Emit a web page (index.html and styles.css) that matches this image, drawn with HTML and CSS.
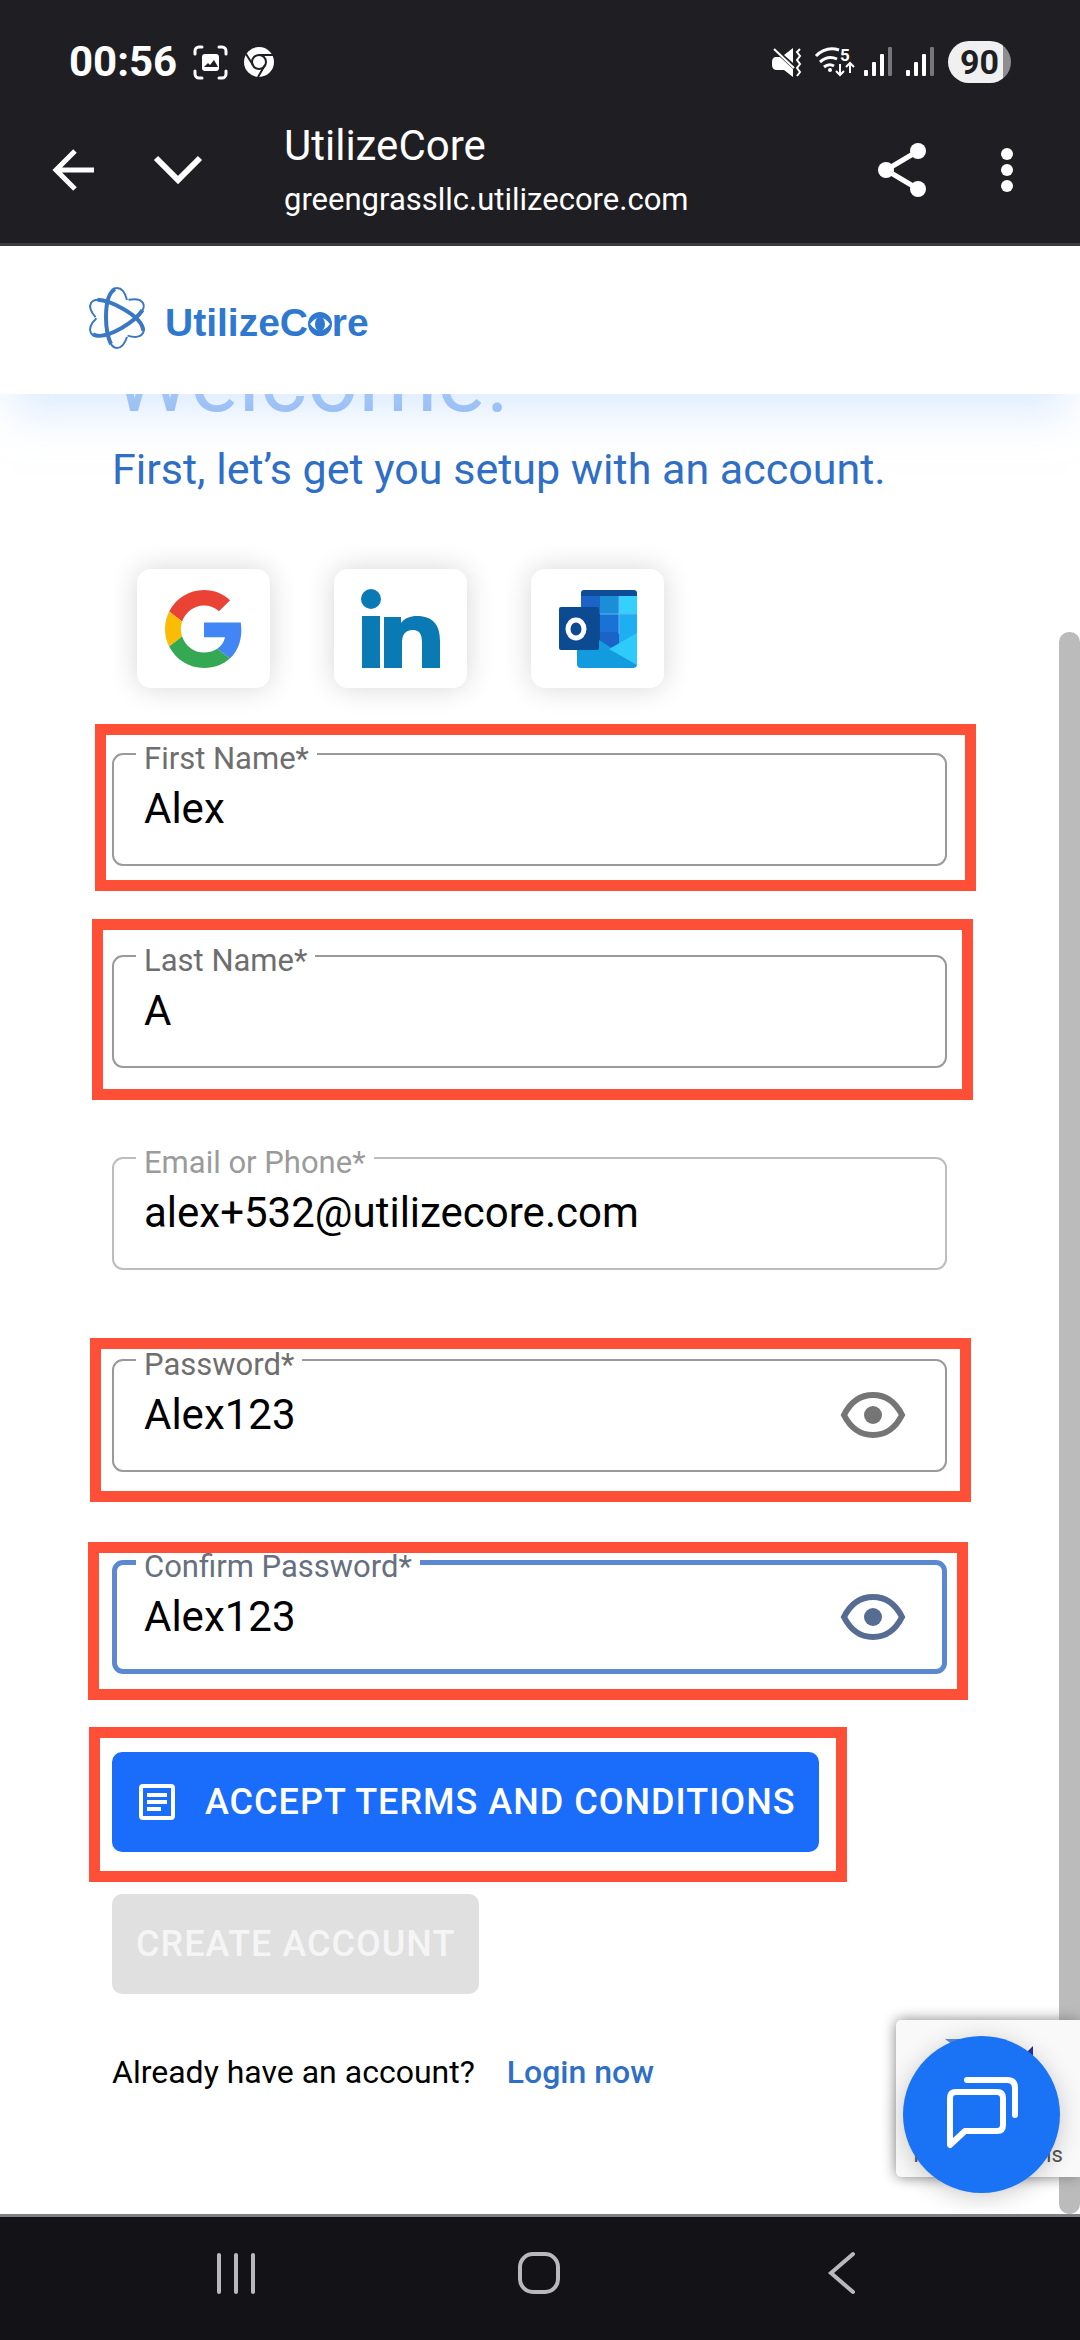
FILE: index.html
```html
<!DOCTYPE html>
<html lang="en">
    <head>
        <meta charset="utf-8">
        <meta name="viewport" content="width=device-width, initial-scale=1">
        <title>UtilizeCore</title>
        <link rel="stylesheet" href="styles.css">
    </head>
    <body>
        <div class="browser-top">
            <div class="status-bar">
                <span class="time">00:56</span>
                <svg class="capture-icon" width="35" height="35" viewBox="0 0 35 35" fill="none" stroke="#fff" stroke-width="3" stroke-linecap="round">
                    <path d="M2 9V6a4 4 0 0 1 4-4h3M26 2h3a4 4 0 0 1 4 4v3M33 26v3a4 4 0 0 1-4 4h-3M9 33H6a4 4 0 0 1-4-4v-3"/>
                    <rect x="9" y="9" width="17" height="17" rx="3" fill="#fff" stroke="none"/>
                    <path d="M11 22l4-4 2 2 4-5 4 7z" fill="#1f1e23" stroke="none"/>
                </svg>
                <svg width="30" height="30" viewBox="0 0 30 30">
                    <circle cx="15" cy="15" r="15" fill="#fff"/>
                    <circle cx="15" cy="15" r="7" fill="none" stroke="#1f1e23" stroke-width="2"/>
                    <path d="M15 8h14M9 18L2 7M21 18l-7 12" stroke="#1f1e23" stroke-width="2"/>
                </svg>
                <div class="status-right">
                    <svg class="mute-icon" width="29" height="29" viewBox="0 0 29 29">
                        <path d="M0 14q0-4 3-5h5l13 12v8l-9-7H5q-5 0-5-5zM12 7l9-7v15z" fill="#fff"/>
                        <path d="M2 1l20 19" stroke="#fff" stroke-width="2"/>
                        <path d="M28 1l-3 3 3 4-3 4 3 4-3 4 3 4-3 4" fill="none" stroke="#fff" stroke-width="2"/>
                    </svg>
                    <svg class="wifi-icon" width="39" height="30" viewBox="0 0 39 30" fill="none" stroke="#fff" stroke-width="3">
                        <path d="M1 9Q11-1 24 3M5 15q8-7 17-3M9 20q5-4 10-1"/>
                        <circle cx="15" cy="23" r="2" fill="#fff" stroke="none"/>
                        <path d="M25 17v11m-4-4l4 4 4-4M35 26V16m-4 4l4-4 4 4" stroke-width="2"/>
                        <text x="25" y="14" class="wifi-band">5</text>
                    </svg>
                    <svg class="signal-icon" width="28" height="30" viewBox="0 0 28 30" fill="#fff">
                        <rect x="0" y="23" width="4" height="6" rx="1"/>
                        <rect x="8" y="15" width="4" height="14" rx="1"/>
                        <rect x="16" y="7" width="4" height="22" rx="1"/>
                        <rect x="24" y="0" width="4" height="29" rx="1" fill="#77767a"/>
                    </svg>
                    <svg class="signal-icon" width="28" height="30" viewBox="0 0 28 30" fill="#fff">
                        <rect x="0" y="23" width="4" height="6" rx="1"/>
                        <rect x="8" y="15" width="4" height="14" rx="1"/>
                        <rect x="16" y="7" width="4" height="22" rx="1"/>
                        <rect x="24" y="0" width="4" height="29" rx="1" fill="#77767a"/>
                    </svg>
                    <span class="battery">90</span>
                </div>
            </div>
            <div class="toolbar">
                <button class="icon-button" aria-label="Back">
                    <svg width="42" height="42" viewBox="0 0 42 42" fill="none" stroke="#fff" stroke-width="5"><path d="M42 21H4M23 2L4 21l19 19"/></svg>
                </button>
                <button class="icon-button chevron" aria-label="Minimize">
                    <svg width="48" height="30" viewBox="0 0 48 30" fill="none" stroke="#fff" stroke-width="6"><path d="M2 3l22 22L46 3"/></svg>
                </button>
                <div class="page-info">
                    <div class="page-title">UtilizeCore</div>
                    <div class="page-url">greengrassllc.utilizecore.com</div>
                </div>
                <button class="icon-button" aria-label="Share">
                    <svg width="48" height="54" viewBox="0 0 48 54" fill="#fff" stroke="#fff" stroke-width="5"><path d="M40 8L8 27l32 19" fill="none"/><circle cx="40" cy="8" r="8" stroke="none"/><circle cx="8" cy="27" r="8" stroke="none"/><circle cx="40" cy="46" r="8" stroke="none"/></svg>
                </button>
                <button class="icon-button more" aria-label="More">
                    <svg width="12" height="44" viewBox="0 0 12 44" fill="#fff"><circle cx="6" cy="6" r="6"/><circle cx="6" cy="22" r="6"/><circle cx="6" cy="38" r="6"/></svg>
                </button>
            </div>
        </div>

        <div class="page">
            <header class="site-header">
                <a href="#" class="logo">
                    <svg width="59" height="64" viewBox="0 0 59 64" fill="none" stroke="#3a78c6">
                        <g id="leaf">
                            <path d="M39 14C37 6 33 2 29 2 22 2 18 15 18 31c0 19 4 31 11 31 5 0 8-5 10-11" stroke-width="2"/>
                            <path d="M27 3c-7 4-9 16-9 28 0 11 2 21 5 27" stroke-width="4"/>
                        </g>
                        <use href="#leaf" transform="rotate(120 29 32)"/>
                        <use href="#leaf" transform="rotate(240 29 32)"/>
                    </svg>
                    <span class="logo-text">UtilizeC<span class="logo-o">o<svg viewBox="0 0 24 24"><circle cx="12" cy="12" r="12" fill="#2f78d0"/><path d="M2 12Q12-1 22 12 12 25 2 12z" fill="#fff"/><ellipse cx="12" cy="12" rx="5" ry="7" fill="#2f78d0"/></svg></span>re</span>
                </a>
            </header>

            <main class="content">
                <h1>Welcome!</h1>
                <p class="intro">First, let’s get you setup with an account.</p>

                <div class="social">
                    <button class="social-button" aria-label="Google">
                        <svg width="78" height="78" viewBox="0 0 48 48">
                            <path fill="#ea4335" d="M24 9.5c3.54 0 6.71 1.22 9.21 3.6l6.85-6.85C35.9 2.38 30.47 0 24 0 14.62 0 6.51 5.38 2.56 13.22l7.98 6.19C12.43 13.72 17.74 9.5 24 9.5z"/>
                            <path fill="#4285f4" d="M46.98 24.55c0-1.57-.15-3.09-.38-4.55H24v9.02h12.94c-.58 2.96-2.26 5.48-4.78 7.18l7.73 6c4.51-4.18 7.09-10.36 7.09-17.65z"/>
                            <path fill="#fbbc05" d="M10.53 28.59c-.48-1.45-.76-2.99-.76-4.59s.27-3.14.76-4.59l-7.98-6.19C.92 16.46 0 20.12 0 24c0 3.88.92 7.54 2.56 10.78l7.97-6.19z"/>
                            <path fill="#34a853" d="M24 48c6.48 0 11.93-2.13 15.89-5.81l-7.73-6c-2.15 1.45-4.92 2.3-8.16 2.3-6.26 0-11.57-4.22-13.47-9.91l-7.98 6.19C6.51 42.62 14.62 48 24 48z"/>
                        </svg>
                    </button>
                    <button class="social-button" aria-label="LinkedIn">
                        <svg width="78" height="78" viewBox="0 0 78 78" fill="#0a7ab5">
                            <circle cx="9" cy="9" r="10"/>
                            <rect x="0" y="26" width="18" height="52"/>
                            <path d="M22 27h17v6c4-5 9-7 16-7 16 0 23 9 23 25v27H60V53c0-8-2-13-9-13-8 0-11 5-11 13v25H22z"/>
                        </svg>
                    </button>
                    <button class="social-button" aria-label="Outlook">
                        <svg width="78" height="78" viewBox="0 0 78 78">
                            <path d="M25 0h50q3 0 3 3v57H22V3q0-3 3-3z" fill="#0f4c97"/>
                            <path d="M22 6h19v18H22zM41 42h19v20H41z" fill="#1b63c6"/>
                            <path d="M41 6h19v18H41z" fill="#1a8fd8"/>
                            <path d="M60 6h18v18H60z" fill="#35d0fb"/>
                            <path d="M41 24h19v18H41z" fill="#1a72d6"/>
                            <path d="M60 24h18v30H60z" fill="#20aef2"/>
                            <path d="M41 24h37M60 6v38" stroke="#5fb7ee" fill="none"/>
                            <path d="M18 50h22l38 24q0 4-4 4H22q-4 0-4-4z" fill="#139be0"/>
                            <path d="M78 43L50 59l28 16z" fill="#2ecbfa"/>
                            <rect x="0" y="17" width="40" height="43" rx="2" fill="#0c4a91"/>
                            <ellipse cx="17" cy="39" rx="8" ry="9" fill="none" stroke="#fff" stroke-width="5"/>
                        </svg>
                    </button>
                </div>

                <form class="signup">
                    <div class="field-box">
                        <fieldset class="field">
                            <legend><label for="first">First Name*</label></legend>
                            <div class="field-row"><input type="text" id="first" value="Alex"></div>
                        </fieldset>
                        <div class="highlight highlight-first"></div>
                    </div>
                    <div class="field-box">
                        <fieldset class="field">
                            <legend><label for="last">Last Name*</label></legend>
                            <div class="field-row"><input type="text" id="last" value="A"></div>
                        </fieldset>
                        <div class="highlight highlight-last"></div>
                    </div>
                    <div class="field-box">
                        <fieldset class="field readonly">
                            <legend><label for="email">Email or Phone*</label></legend>
                            <div class="field-row"><input type="text" id="email" value="alex+532@utilizecore.com" readonly></div>
                        </fieldset>
                    </div>
                    <div class="field-box">
                        <fieldset class="field">
                            <legend><label for="password">Password*</label></legend>
                            <div class="field-row">
                                <input type="text" id="password" value="Alex123">
                                <button type="button" class="eye" aria-label="Hide password">
                                    <svg width="64" height="46" viewBox="0 0 64 46"><path d="M3 23Q13 3 32 3t29 20Q51 43 32 43T3 23z" fill="none" stroke="currentColor" stroke-width="6"/><circle cx="32" cy="23" r="9" fill="currentColor"/></svg>
                                </button>
                            </div>
                        </fieldset>
                        <div class="highlight highlight-password"></div>
                    </div>
                    <div class="field-box">
                        <fieldset class="field active">
                            <legend><label for="confirm">Confirm Password*</label></legend>
                            <div class="field-row">
                                <input type="text" id="confirm" value="Alex123">
                                <button type="button" class="eye" aria-label="Hide password">
                                    <svg width="64" height="46" viewBox="0 0 64 46"><path d="M3 23Q13 3 32 3t29 20Q51 43 32 43T3 23z" fill="none" stroke="currentColor" stroke-width="6"/><circle cx="32" cy="23" r="9" fill="currentColor"/></svg>
                                </button>
                            </div>
                        </fieldset>
                        <div class="highlight highlight-confirm"></div>
                    </div>

                    <div class="actions">
                        <div class="accept-box">
                            <button type="button" class="button accept">
                                <svg width="36" height="36" viewBox="0 0 36 36" fill="none" stroke="currentColor" stroke-width="4"><rect x="2" y="2" width="32" height="32" rx="2"/><path d="M8 11h20M8 18h20M8 25h14"/></svg>
                                ACCEPT TERMS AND CONDITIONS
                            </button>
                            <div class="highlight highlight-accept"></div>
                        </div>
                        <button type="submit" class="button create" disabled>CREATE ACCOUNT</button>
                    </div>
                </form>

                <p class="login">Already have an account? <a href="#">Login now</a></p>
            </main>

            <div class="scrollbar"></div>
            <div class="recaptcha">
                <svg width="90" height="90" viewBox="0 0 90 90">
                    <path d="M2 1h44L30 22z" fill="#5b8fd8"/>
                    <path d="M90 8v38H52z" fill="#2b2f98"/>
                </svg>
                <span>Privacy - Terms</span>
            </div>
            <button class="chat" aria-label="Chat">
                <svg viewBox="0 0 157 157" fill="none" stroke="#fff" stroke-width="6" stroke-linecap="round" stroke-linejoin="round">
                    <path d="M47 109V62q0-6 6-6h41q6 0 6 6v27q0 6-6 6H62z"/>
                    <path d="M64 44h40q8 0 8 8v27"/>
                </svg>
            </button>
        </div>

        <nav class="phone-nav">
            <button class="icon-button" aria-label="Recents">
                <svg width="38" height="42" viewBox="0 0 38 42" stroke="#b9b9bd" stroke-width="4" stroke-linecap="round"><path d="M2 3v37M19 3v37M36 3v37"/></svg>
            </button>
            <button class="icon-button" aria-label="Home">
                <svg width="42" height="42" viewBox="0 0 42 42" fill="none" stroke="#b9b9bd" stroke-width="4"><rect x="2" y="2" width="38" height="38" rx="13"/></svg>
            </button>
            <button class="icon-button" aria-label="Back">
                <svg width="28" height="42" viewBox="0 0 28 42" fill="none" stroke="#b9b9bd" stroke-width="4" stroke-linecap="round"><path d="M25 2L3 21l22 19"/></svg>
            </button>
        </nav>
    </body>
</html>
```
FILE: styles.css
```css
* {
    box-sizing: border-box;
}
body {
    display: flex;
    flex-direction: column;
    min-height: 100vh;
    margin: 0;
    font-family: Roboto, Arial, sans-serif;
    background-color: #fff;
    color: #000;
}
svg {
    display: block;
    flex-shrink: 0;
    overflow: visible;
}
button {
    font-family: inherit;
    border: none;
    padding: 0;
    cursor: pointer;
}
.icon-button {
    background: none;
}

/* browser and phone bars */
.browser-top {
    background-color: #1f1e23;
    border-bottom: 3px solid #3b3a3e;
    color: #fff;
}
.status-bar {
    display: flex;
    align-items: center;
    gap: 16px;
    padding: 41px 69px 0 69px;
}
.time {
    font-size: 42px;
    line-height: 42px;
    font-weight: bold;
}
.status-right {
    display: flex;
    align-items: center;
    gap: 14px;
    margin-left: auto;
}
.wifi-icon {
    margin-right: -4px;
}
.wifi-band {
    font-size: 17px;
    font-weight: bold;
    fill: #fff;
    stroke: none;
}
.battery {
    width: 63px;
    height: 42px;
    border-radius: 21px;
    background: linear-gradient(to right, #f0f0f0 88%, #8e8e90 88%);
    color: #1f1e23;
    font-size: 34px;
    line-height: 42px;
    font-weight: bold;
    text-align: center;
}
.toolbar {
    display: flex;
    align-items: center;
    height: 160px;
    padding: 14px 67px 0 52px;
}
.chevron {
    margin: 0 82px 0 60px;
}
.page-info {
    flex: 1;
}
.page-title {
    font-size: 42px;
    line-height: 48px;
    margin-bottom: 12px;
}
.page-url {
    font-size: 31px;
    line-height: 36px;
}
.more {
    margin-left: 75px;
}
.phone-nav {
    display: grid;
    grid-template-columns: 1fr 1fr 1fr;
    align-items: center;
    justify-items: center;
    height: 126px;
    padding: 0 86px 12px 84px;
    background-color: #121217;
    border-top: 3px solid #7f8084;
}

/* page */
.page {
    position: relative;
    flex: 1;
    overflow: hidden;
}
.site-header {
    position: relative;
    height: 148px;
    padding: 40px 88px;
    background-color: #fff;
    box-shadow: 0 32px 40px -12px rgba(190, 220, 255, 0.5);
}
.logo {
    display: inline-flex;
    align-items: center;
    gap: 18px;
    color: #2f78d0;
    text-decoration: none;
}
.logo-text {
    font-family: "Liberation Sans", Arial, sans-serif;
    font-size: 39px;
    line-height: 48px;
    padding-top: 10px;
    font-weight: bold;
}
.logo-o {
    position: relative;
}
.logo-o svg {
    position: absolute;
    left: 0;
    bottom: 8px;
    width: 24px;
    height: 24px;
}
.content {
    overflow: hidden;
    padding: 0 133px 120px 112px;
}
h1 {
    margin: -57px 0 20px 0;
    font-size: 90px;
    line-height: 88px;
    font-weight: normal;
    color: #8fb6f0;
}
.intro {
    margin: 0;
    font-size: 43px;
    line-height: 48px;
    color: #2f6fc6;
}
.social {
    display: flex;
    gap: 64px;
    margin: 76px 0 44px 25px;
}
.social-button {
    display: flex;
    align-items: center;
    justify-content: center;
    width: 133px;
    height: 119px;
    border-radius: 14px;
    background-color: #fff;
    box-shadow: 0 0 28px rgba(0, 0, 0, 0.16);
}

/* form */
.signup {
    display: flex;
    flex-direction: column;
    gap: 68px;
}
.field-box {
    position: relative;
}
.field {
    margin: 0;
    padding: 0;
    min-width: 0;
    border: 2px solid #9a9a9a;
    border-radius: 11px;
    color: #6e6e6e;
}
.field legend {
    margin-left: 22px;
    padding: 10px 8px 0 8px;
    font-size: 31px;
    line-height: 34px;
}
.field-row {
    display: flex;
    align-items: center;
    height: 88px;
    padding: 0 40px 22px 30px;
}
.field input {
    flex: 1;
    min-width: 0;
    padding: 0;
    border: none;
    outline: none;
    background: none;
    font-family: inherit;
    font-size: 42px;
    line-height: 50px;
    color: #000;
}
.eye {
    background: none;
    color: #757575;
}
.readonly {
    border-color: #bdbdbd;
    color: #9b9b9b;
}
.active {
    border: 5px solid #5c88d2;
    color: #66707e;
}
.active legend {
    margin-left: 19px;
}
.active .field-row {
    height: 85px;
    padding: 0 37px 19px 27px;
}
.active .eye {
    color: #566c92;
}

/* red boxes marking what has to be filled in */
.highlight {
    position: absolute;
    border: 11px solid #ff4f36;
    pointer-events: none;
}
.highlight-first {
    inset: -8px -29px -25px -17px;
}
.highlight-last {
    inset: -15px -26px -32px -20px;
}
.highlight-password {
    inset: 0 -24px -30px -22px;
}
.highlight-confirm {
    inset: 2px -21px -26px -24px;
}
.highlight-accept {
    inset: -25px -28px -30px -23px;
}

.actions {
    display: flex;
    flex-direction: column;
    align-items: flex-start;
    gap: 42px;
    margin-top: 10px;
}
.accept-box {
    position: relative;
}
.button {
    display: flex;
    align-items: center;
    gap: 30px;
    height: 100px;
    padding: 0 24px;
    border-radius: 10px;
    font-size: 36px;
    font-weight: 500;
    letter-spacing: 1px;
    white-space: nowrap;
}
.accept {
    padding-left: 27px;
    background-color: #1a6cfb;
    color: #fff;
}
.create {
    background-color: #e0e0e0;
    color: #f5f5f5;
}
.login {
    margin: 60px 0 0 0;
    font-size: 32px;
    line-height: 36px;
}
.login a {
    margin-left: 24px;
    color: #2f6fc6;
    font-weight: 500;
    text-decoration: none;
}

/* things floating over the page */
.scrollbar {
    position: absolute;
    top: 386px;
    right: 0;
    bottom: 0;
    width: 21px;
    border-radius: 10px;
    background-color: #bbb;
}
.recaptcha {
    position: absolute;
    right: 0;
    bottom: 37px;
    display: flex;
    flex-direction: column;
    align-items: center;
    justify-content: space-between;
    width: 184px;
    height: 157px;
    padding: 18px 17px 10px 17px;
    border-radius: 5px 0 0 5px;
    background-color: #f9f9f9;
    box-shadow: 0 0 14px #808080;
    color: #555;
    font-size: 22px;
    line-height: 24px;
    white-space: nowrap;
}
.chat {
    position: absolute;
    right: 20px;
    bottom: 21px;
    width: 157px;
    height: 157px;
    border-radius: 50%;
    background-color: #1a73f4;
    box-shadow: 0 4px 24px rgba(0, 0, 0, 0.2);
}
```
